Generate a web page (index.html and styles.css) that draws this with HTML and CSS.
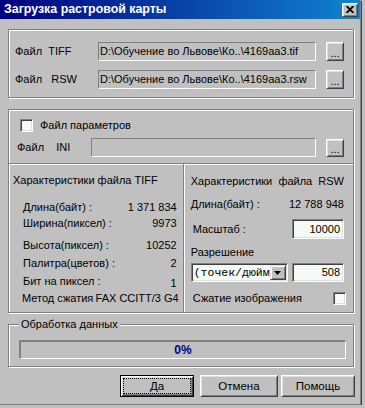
FILE: index.html
```html
<!DOCTYPE html>
<html lang="ru">
<head>
<meta charset="utf-8">
<title>Загрузка растровой карты</title>
<link rel="stylesheet" href="styles.css">
</head>
<body>
<div class="window">
  <div class="titlebar">
    <span class="title">Загрузка растровой карты</span>
    <div class="close">
      <svg width="8" height="7" viewBox="0 0 8 7"><path d="M0.5 0 L7.5 7 M7.5 0 L0.5 7" stroke="#000" stroke-width="1.8" fill="none"/></svg>
    </div>
  </div>
  <div class="content">
    <div class="group g1">
      <div class="frow"><span class="flabel">Файл  TIFF</span><div class="field">D:\Обучение во Львове\Ко..\4169aa3.tif</div><div class="btn dots">...</div></div>
      <div class="frow"><span class="flabel">Файл   RSW</span><div class="field">D:\Обучение во Львове\Ко..\4169aa3.rsw</div><div class="btn dots">...</div></div>
    </div>

    <div class="group g2">
      <div class="g2top">
        <div class="chkrow"><span class="chk"></span><span>Файл параметров</span></div>
        <div class="frow ini"><span class="flabel">Файл    INI</span><div class="field"></div><div class="btn dots">...</div></div>
      </div>
      <div class="panels">
        <div class="panel left">
          <div class="ptitle">Характеристики файла TIFF</div>
          <div class="prow r1"><span>Длина(байт) :</span><span>1 371 834</span></div>
          <div class="prow r2"><span>Ширина(пиксел) :</span><span>9973</span></div>
          <div class="prow r3"><span>Высота(пиксел) :</span><span>10252</span></div>
          <div class="prow r4"><span>Палитра(цветов) :</span><span>2</span></div>
          <div class="prow r5"><span>Бит на пиксел :</span><span class="low">1</span></div>
          <div class="prow r6"><span>Метод сжатия</span><span>FAX CCITT/3 G4</span></div>
        </div>
        <div class="panel right">
          <div class="ptitle">Характеристики  файла  RSW</div>
          <div class="prow q1"><span>Длина(байт) :</span><span>12 788 948</span></div>
          <div class="erow q2"><span class="ind">Масштаб :</span><div class="edit scale">10000</div></div>
          <div class="plabel q3">Разрешение</div>
          <div class="erow q4">
            <div class="combo"><span class="ctext">(точек/дюйм</span><span class="arrow"><svg width="7" height="4" viewBox="0 0 7 4"><path d="M0 0 H7 L3.5 4 Z" fill="#000"/></svg></span></div>
            <div class="edit res">508</div>
          </div>
          <div class="erow q5"><span class="ind">Сжатие изображения</span><span class="chk chk2"></span></div>
        </div>
      </div>
    </div>

    <div class="group g3">
      <span class="legend">Обработка данных</span>
      <div class="progress">0%</div>
    </div>

    <div class="buttons">
      <div class="btn default"><span class="focus">Да</span></div>
      <div class="btn wbtn cancel">Отмена</div>
      <div class="btn wbtn help">Помощь</div>
    </div>
  </div>
</div>
</body>
</html>
```
FILE: styles.css
```css
html, body {
  margin: 0;
  padding: 0;
  background: #c0c0c0;
}
body {
  font-family: "Liberation Sans", Arial, sans-serif;
  font-size: 11px;
  line-height: 13px;
  color: #000;
}
.window {
  width: 360px;
  height: 404px;
  border-right: 1px solid #808080;
  border-bottom: 1px solid #808080;
  box-shadow: 1px 1px 0 #404040;
  overflow: hidden;
}
.titlebar {
  height: 19px;
  display: flex;
  align-items: center;
  padding: 0 2px 0 4px;
  background: linear-gradient(90deg, #000080 0%, #1084d0 100%);
}
.title {
  color: #fff;
  font-weight: bold;
  font-size: 12.4px;
}
.close {
  margin-left: auto;
  width: 16px;
  height: 14px;
  box-sizing: border-box;
  display: flex;
  align-items: center;
  justify-content: center;
  background: #c0c0c0;
  border: 1px solid;
  border-color: #fff #404040 #404040 #fff;
  box-shadow: inset 1px 1px 0 #dfdfdf, inset -1px -1px 0 #808080;
}
.content {
  padding: 10px 0 0 8px;
}
.group {
  box-sizing: border-box;
  width: 346px;
  border: 1px solid #808080;
  box-shadow: inset 1px 1px 0 #fff, 1px 1px 0 #fff;
}
.g1 {
  height: 69px;
  padding: 12px 0 0 6px;
}
.frow {
  display: flex;
  align-items: center;
  height: 19px;
}
.frow + .frow {
  margin-top: 9px;
}
.flabel {
  width: 83px;
  white-space: pre;
}
.field {
  box-sizing: border-box;
  width: 218px;
  height: 19px;
  border: 1px solid;
  border-color: #808080 #fff #fff #808080;
  padding-left: 1px;
  line-height: 17px;
  white-space: nowrap;
  overflow: hidden;
}
.btn {
  box-sizing: border-box;
  background: #c0c0c0;
  border: 1px solid;
  border-color: #fff #404040 #404040 #fff;
  box-shadow: inset 1px 1px 0 #dfdfdf, inset -1px -1px 0 #808080;
  display: flex;
  align-items: center;
  justify-content: center;
}
.dots {
  width: 18px;
  height: 19px;
  margin-left: 10px;
  line-height: 12px;
  padding-top: 2px;
}
.g2 {
  margin-top: 11px;
  height: 204px;
}
.g2top {
  height: 53px;
  box-sizing: border-box;
  padding: 9px 0 0 11px;
}
.chkrow {
  display: flex;
  align-items: center;
  height: 13px;
  gap: 7px;
}
.chk {
  box-sizing: border-box;
  width: 13px;
  height: 13px;
  background: #f4fbf4;
  border: 1px solid;
  border-color: #808080 #fff #fff #808080;
  box-shadow: inset 1px 1px 0 #404040, inset -1px -1px 0 #dfdfdf;
}
.frow.ini {
  margin-top: 6px;
}
.ini .flabel {
  margin-left: -3px;
  width: 74px;
}
.ini .field {
  width: 225px;
}
.ini .dots {
  height: 18px;
}
.panels {
  box-sizing: border-box;
  height: 149px;
  border-top: 1px solid #808080;
  box-shadow: inset 0 1px 0 #fff;
  display: flex;
}
.panel {
  box-sizing: border-box;
}
.panel.left {
  width: 175px;
  border-right: 1px solid #808080;
  padding: 10px 6px 0 4px;
}
.panel.right {
  flex: 1;
  box-shadow: inset 1px 0 0 #fff, inset 0 1px 0 #fff;
  padding: 11px 9px 0 7px;
}
.ptitle {
  white-space: pre;
}
.prow {
  display: flex;
  justify-content: space-between;
  white-space: nowrap;
}
.left .prow {
  margin-left: 10px;
}
.r1 { margin-top: 14px; }
.r2 { margin-top: 3px; }
.r3 { margin-top: 9px; }
.r4 { margin-top: 5px; }
.r5 { margin-top: 5px; }
.r6 { margin-top: 4px; margin-left: 9px !important; margin-right: -2px; }
.low { position: relative; top: 2px; }
.q1 { margin-top: 10px; }
.erow {
  display: flex;
  align-items: center;
  justify-content: space-between;
}
.ind { margin-left: 2px; }
.q2 { margin-top: 8px; height: 20px; }
.q3 { margin-top: 7px; }
.q4 { margin-top: 4px; height: 19px; }
.q5 { margin-top: 10px; height: 13px; }
.chk2 { margin-right: -2px; }
.edit {
  box-sizing: border-box;
  width: 52px;
  height: 100%;
  background: #f4fbf4;
  border: 1px solid;
  border-color: #808080 #fff #fff #808080;
  box-shadow: inset 1px 1px 0 #404040, inset -1px -1px 0 #dfdfdf;
  text-align: right;
  padding: 0 3px 0 0;
  display: flex;
  align-items: center;
  justify-content: flex-end;
}
.combo {
  box-sizing: border-box;
  width: 97px;
  height: 19px;
  background: #f4fbf4;
  border: 1px solid;
  border-color: #808080 #fff #fff #808080;
  box-shadow: inset 1px 1px 0 #404040, inset -1px -1px 0 #dfdfdf;
  display: flex;
  align-items: center;
  padding: 1px 1px 1px 2px;
  overflow: hidden;
}
.ctext {
  font-family: "Liberation Mono", "Courier New", monospace;
  font-size: 11.5px;
  flex: 1;
  white-space: nowrap;
  overflow: hidden;
}
.arrow {
  box-sizing: border-box;
  width: 16px;
  height: 15px;
  flex: none;
  background: #c0c0c0;
  border: 1px solid;
  border-color: #dfdfdf #404040 #404040 #dfdfdf;
  box-shadow: inset 1px 1px 0 #fff, inset -1px -1px 0 #808080;
  display: flex;
  align-items: center;
  justify-content: center;
}
.g3 {
  margin-top: 11px;
  height: 43px;
  position: relative;
  padding: 15px 0 0 10px;
}
.legend {
  position: absolute;
  top: -7px;
  left: 10px;
  padding: 0 2px;
  background: #c0c0c0;
}
.progress {
  box-sizing: border-box;
  width: 327px;
  height: 19px;
  border-top: 2px solid #808080;
  border-left: 2px solid #808080;
  border-right: 1px solid #fff;
  border-bottom: 1px solid #fff;
  text-align: center;
  font-weight: bold;
  font-size: 12px;
  line-height: 16px;
  color: #000080;
}
.buttons {
  margin-top: 8px;
  display: flex;
  padding-left: 112px;
}
.buttons .btn {
  height: 22px;
  font-size: 11.5px;
}
.default {
  width: 74px;
  border: 1px solid #000;
  box-shadow: inset 1px 1px 0 #fff, inset -1px -1px 0 #404040, inset 2px 2px 0 #dfdfdf, inset -2px -2px 0 #808080;
  padding: 2px;
  align-items: stretch;
}
.focus {
  flex: 1;
  border: 1px dotted #000;
  display: flex;
  align-items: center;
  justify-content: center;
}
.cancel {
  width: 78px;
  margin-left: 6px;
}
.help {
  width: 74px;
  margin-left: 3px;
}
```
